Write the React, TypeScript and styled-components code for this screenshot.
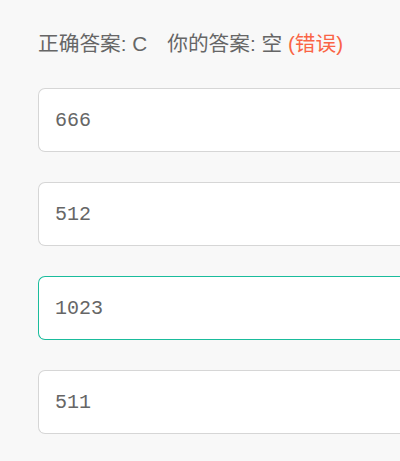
import React from "react";
import styled, { createGlobalStyle } from "styled-components";

const GlobalStyle = createGlobalStyle`
  html, body {
    margin: 0;
    padding: 0;
    background: #f8f8f8;
    overflow: hidden;
  }
`;

const Page = styled.div`
  padding: 30px 0 0 38px;
  font-family: "Liberation Sans", Arial, "Noto Sans CJK SC", sans-serif;
`;

const Result = styled.div`
  font-size: 20.7px;
  line-height: 28px;
  color: #666;
  margin-bottom: 30px;
  white-space: nowrap;
`;

const Part = styled.span`
  margin-right: 20px;
`;

const Wrong = styled.span`
  color: #fa6445;
`;

const OptionList = styled.div`
  display: flex;
  flex-direction: column;
  gap: 30px;
`;

const Option = styled.div<{ $selected?: boolean }>`
  box-sizing: border-box;
  height: 64px;
  display: flex;
  align-items: center;
  padding: 0 16px;
  background: #fff;
  border: 1px solid ${(p) => (p.$selected ? "#1abc9c" : "#d6d6d6")};
  border-right: none;
  border-radius: 7px 0 0 7px;
  font-family: "Liberation Mono", "Courier New", monospace;
  font-size: 20px;
  color: #666;
`;

const options = [
  { text: "666" },
  { text: "512" },
  { text: "1023", selected: true },
  { text: "511" },
];

export default function App() {
  return (
    <>
      <GlobalStyle />
      <Page>
        <Result>
          <Part>正确答案: C</Part>
          你的答案: 空 <Wrong>(错误)</Wrong>
        </Result>
        <OptionList>
          {options.map((o, i) => (
            <Option key={i} $selected={o.selected}>
              {o.text}
            </Option>
          ))}
        </OptionList>
      </Page>
    </>
  );
}
